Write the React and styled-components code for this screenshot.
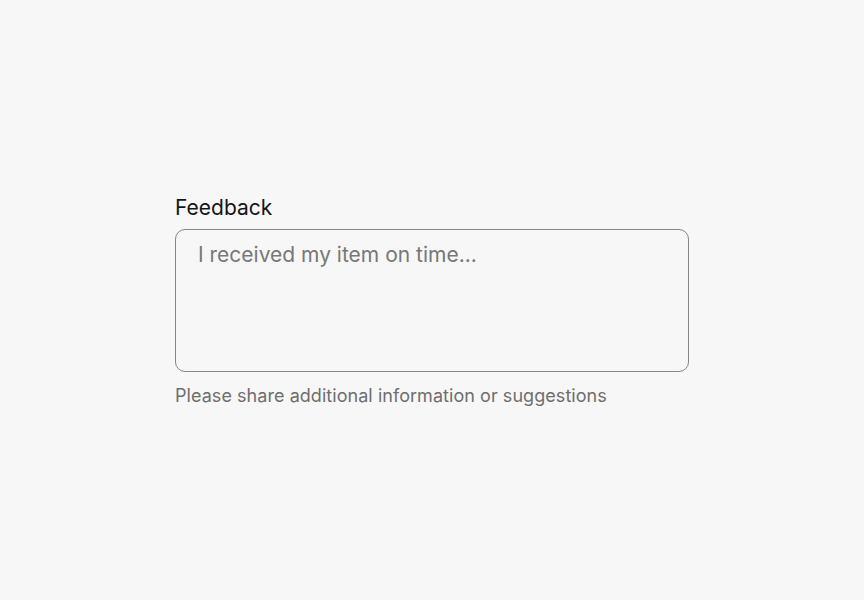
import styled, { createGlobalStyle } from 'styled-components';

const GlobalStyle = createGlobalStyle`
    html, body {
        margin: 0;
        padding: 0;
        background: #f7f7f7;
    }
    body {
        font-family: Inter, "Noto Sans", sans-serif;
    }
`

const Page = styled.main`
    height: 600px;
    display: flex;
    align-items: center;
    justify-content: center;
`

const Field = styled.div`
    width: 514px;
    display: flex;
    flex-direction: column;
    margin-top: 2px;
`

const Label = styled.label`
    font-size: 21px;
    font-weight: 400;
    color: #151515;
    line-height: 24px;
    margin-bottom: 9px;
`

const TextArea = styled.textarea`
    box-sizing: border-box;
    width: 100%;
    height: 143px;
    padding: 12px 22px;
    border: 1.5px solid #868686;
    border-radius: 10px;
    background: transparent;
    font-family: inherit;
    font-size: 21px;
    line-height: 26px;
    color: #222;
    resize: none;
    outline: none;

    &::placeholder {
        color: #777;
    }
`

const Hint = styled.p`
    margin: 13px 0 0;
    font-size: 18px;
    line-height: 22px;
    letter-spacing: 0.05px;
    color: #6e6e6e;
`

const App = () => {
    return (
        <>
            <GlobalStyle />
            <Page>
                <Field>
                    <Label htmlFor="feedback">Feedback</Label>
                    <TextArea id="feedback" placeholder="I received my item on time..." />
                    <Hint>Please share additional information or suggestions</Hint>
                </Field>
            </Page>
        </>
    );
}

export default App;
